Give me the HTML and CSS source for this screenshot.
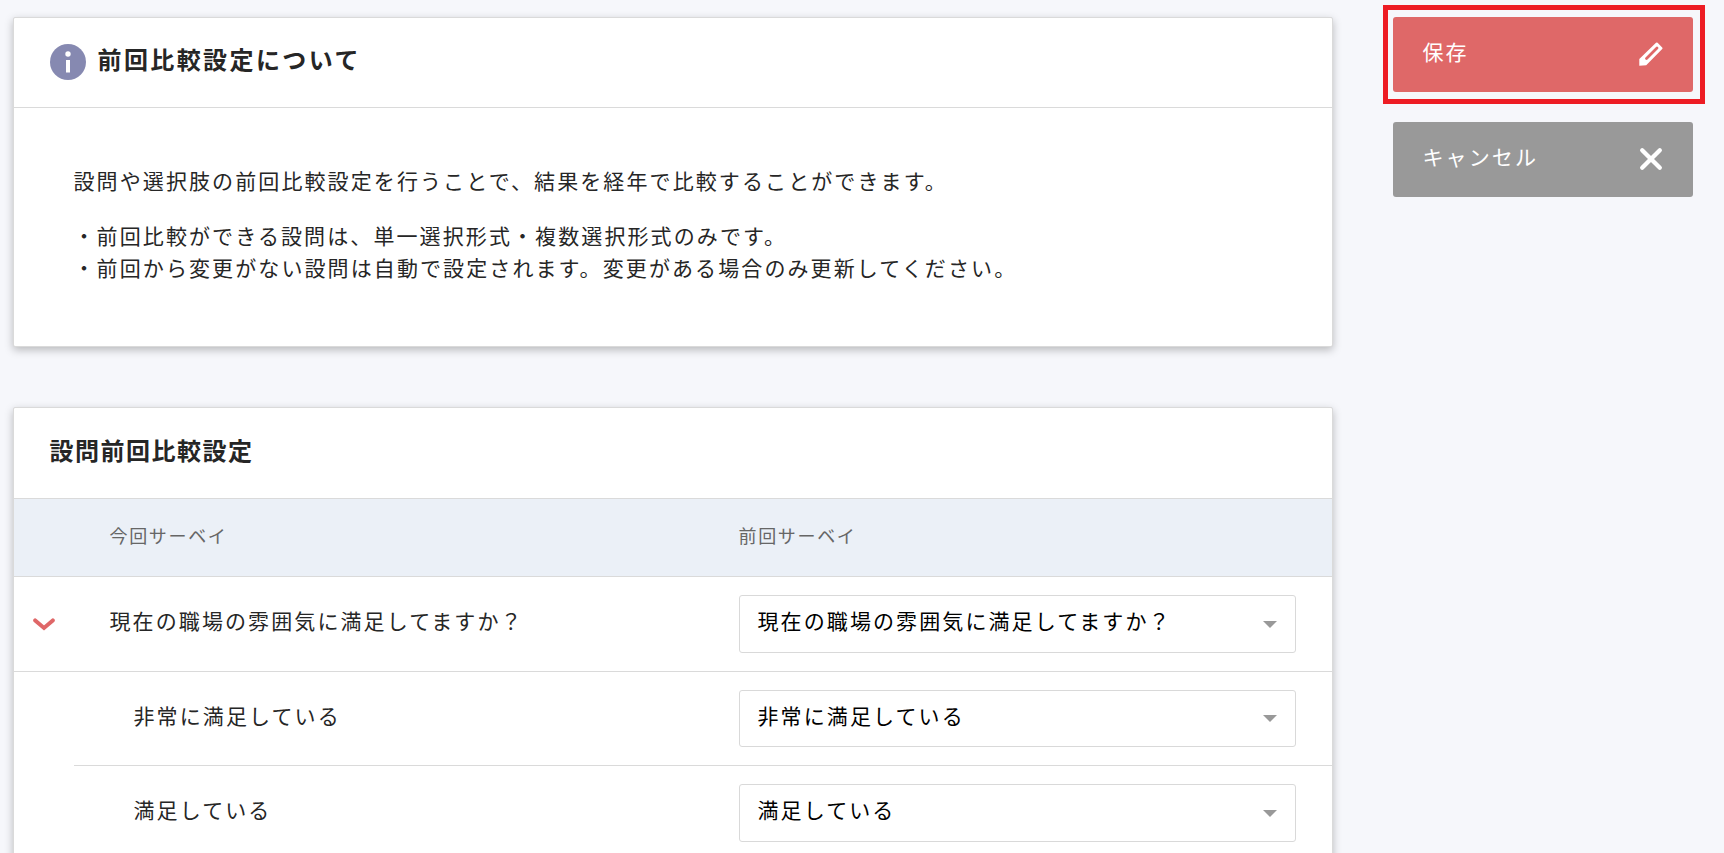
FILE: index.html
```html
<!DOCTYPE html>
<html lang="ja">
<head>
<meta charset="utf-8">
<title>前回比較設定</title>
<link rel="stylesheet" href="styles.css">
</head>
<body>
<div class="page">
  <main class="main">
    <section class="card">
      <header class="card-header">
        <svg class="info-icon" viewBox="0 0 36 36"><circle cx="18" cy="18" r="18" fill="#8689b1"/><circle cx="18" cy="10" r="2.700" fill="#fff"/><rect x="16" y="16" width="4" height="12.500" fill="#fff"/></svg>
        <h2 class="title title-info">前回比較設定について</h2>
      </header>
      <div class="card-body">
        <p class="lead">設問や選択肢の前回比較設定を行うことで、結果を経年で比較することができます。</p>
        <p class="notes">・前回比較ができる設問は、単一選択形式・複数選択形式のみです。<br>・前回から変更がない設問は自動で設定されます。変更がある場合のみ更新してください。</p>
      </div>
    </section>
    <section class="card card-table">
      <header class="card-header">
        <h2 class="title">設問前回比較設定</h2>
      </header>
      <div class="thead">
        <div class="cell-current">今回サーベイ</div>
        <div class="cell-previous">前回サーベイ</div>
      </div>
      <div class="row">
        <svg class="chevron" viewBox="0 0 22 13"><path d="M2.200 2.400 11 9.900l8.800-7.500" fill="none" stroke="#df6768" stroke-width="4" stroke-linecap="round"/></svg>
        <div class="cell-current">現在の職場の雰囲気に満足してますか？</div>
        <div class="select"><span>現在の職場の雰囲気に満足してますか？</span><i class="caret"></i></div>
      </div>
      <div class="row row-choice">
        <div class="cell-current">非常に満足している</div>
        <div class="select"><span>非常に満足している</span><i class="caret"></i></div>
      </div>
      <div class="row row-choice">
        <div class="cell-current">満足している</div>
        <div class="select"><span>満足している</span><i class="caret"></i></div>
      </div>
    </section>
  </main>
  <aside class="actions">
    <div class="highlight">
      <button class="button button-save"><span>保存</span>
        <svg class="icon" viewBox="0 0 24 24"><path d="M.3 23.800V17L17 .8Q17.800 0 18.600.8L23.200 5.400Q24 6.200 23.200 7L7.200 23.200Z" fill="#fff"/><path d="M7.500 16.500 18 6" stroke="#df6868" stroke-width="2.800" stroke-linecap="round"/></svg>
      </button>
    </div>
    <button class="button button-cancel"><span>キャンセル</span>
      <svg class="icon" viewBox="0 0 24 24"><path d="M3.200 3.200 20.800 20.800M20.800 3.200 3.200 20.800" stroke="#fff" stroke-width="4.300" stroke-linecap="round"/></svg>
    </button>
  </aside>
</div>
</body>
</html>
```
FILE: styles.css
```css
* { box-sizing: border-box; }
html { height: 100%; overflow: hidden; }
body {
  margin: 0;
  height: 853px;
  overflow: hidden;
  background: #f6f7fb;
  color: #262626;
  font: 21px/31.5px "Noto Sans CJK JP", sans-serif;
  letter-spacing: .1em;
}
h2, p { margin: 0; }
svg { display: block; flex: none; }

.page { display: flex; align-items: flex-start; height: 853px; padding: 5px 19px 0 13px; overflow: hidden; }
.main { width: 1320px; margin-top: 12px; flex: none; }

.card {
  border: 1px solid #dadada;
  background: #fff;
  background-clip: padding-box;
  border-radius: 2px;
  box-shadow: 0 3px 8px rgba(0, 0, 0, .25);
  height: 330px;
}
.card-table { margin-top: 60px; height: 520px; }
.card-header {
  display: flex;
  align-items: center;
  gap: 11.5px;
  height: 90px;
  padding: 0 36px;
  border-bottom: 1px solid #dadada;
}
.info-icon { width: 36px; height: 36px; margin-top: -1px; }
.title { font-size: 24px; line-height: 36px; font-weight: 700; letter-spacing: .063em; margin: -6px 0 0 -.5px; }
.title-info { letter-spacing: .1em; margin: -8px 0 0; }
.card-body { padding: 57px 59.5px; }
.notes { margin-top: 22px; line-height: 32px; }
.card-table .card-header { height: 91px; }

.thead, .row { display: flex; align-items: center; }
.thead {
  height: 78px;
  padding: 0 36px 4px 95.5px;
  background: #ebf0f7;
  border-bottom: 1px solid #dadada;
  color: #666;
  font-size: 18px;
  letter-spacing: .093em;
}
.cell-current { flex: none; width: 629px; }
.row { height: 94.5px; padding-right: 36px; border-bottom: 1px solid #dadada; }
.row .cell-current { padding-bottom: 6px; }
.chevron { width: 22px; height: 13px; margin: 1px 54.5px 0 19px; }
.row .chevron + .cell-current { width: 629.5px; }
.row-choice { margin-left: 60px; padding-left: 59.5px; }
.row-choice .cell-current { width: 605.5px; }
.select {
  flex: 1;
  display: flex;
  align-items: center;
  justify-content: space-between;
  height: 57.5px;
  padding: 0 18px 0 17.5px;
  border: 1px solid #d9d9d9;
  border-radius: 3px;
  color: #000;
}
.select span { padding-bottom: 6px; }
.caret { margin-top: 1px; border: 7px solid transparent; border-top-color: #999; border-bottom: 0; }

.actions { display: flex; flex-direction: column; margin-left: 50px; }
.highlight { width: 322px; height: 99px; padding: 7px 5px; border: 5px solid #ed1c24; }
.button {
  display: flex;
  align-items: center;
  justify-content: space-between;
  width: 300px;
  height: 75px;
  padding: 0 30px 0 29.5px;
  border: 0;
  border-radius: 3px;
  color: #fff;
  font: inherit;
  letter-spacing: .1em;
}
.button span { padding-bottom: 5px; }
.button-save { background: #df6868; }
.button-cancel { background: #999; margin: 18px 0 0 10px; }
.icon { width: 24px; height: 24px; margin-top: -1px; }
```
